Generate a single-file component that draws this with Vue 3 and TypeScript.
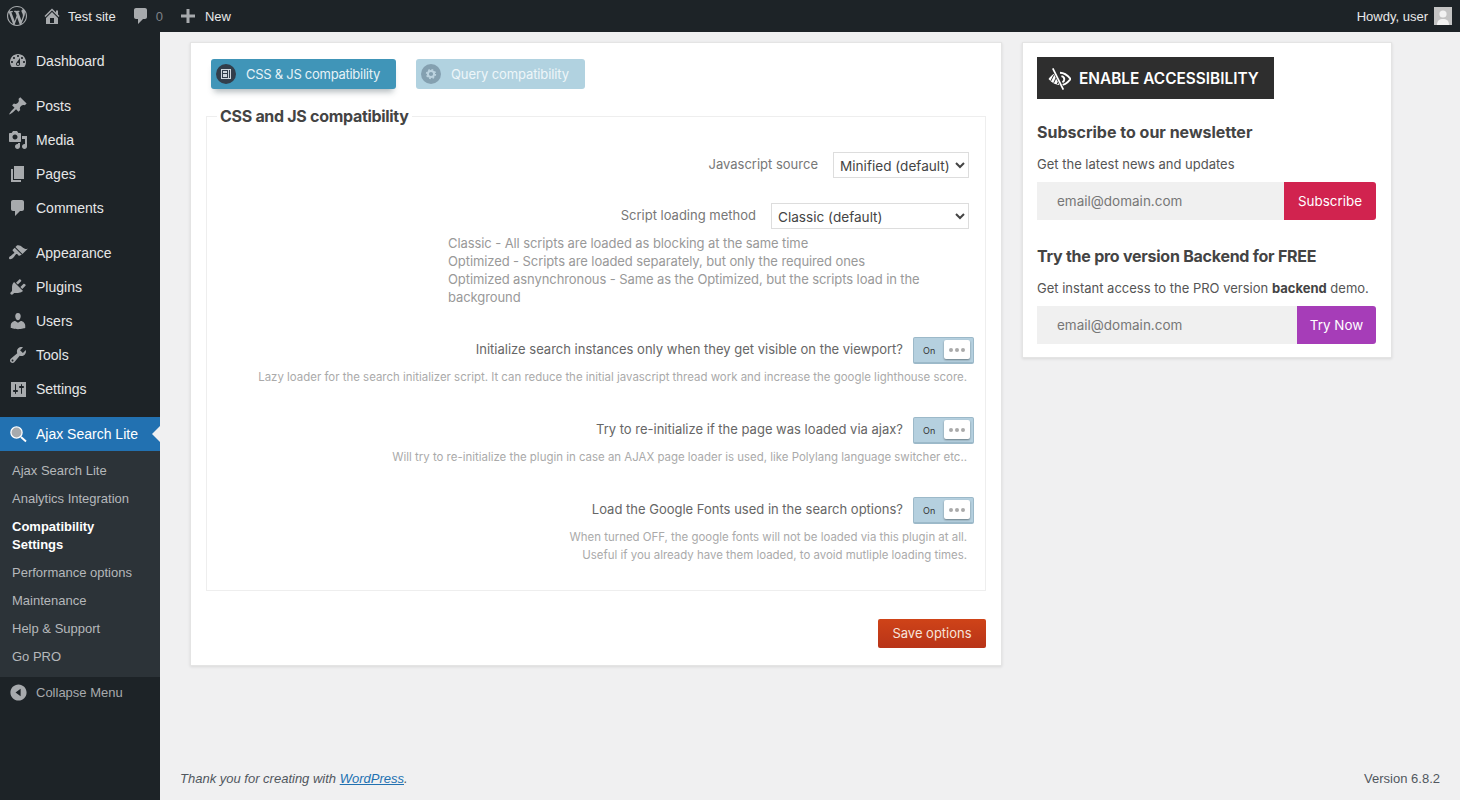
<script setup lang="ts">
const icons: Record<string, string> = {
  dashboard: 'M3.76 16h12.48c1.1-1.37 1.76-3.11 1.76-5 0-4.42-3.58-8-8-8s-8 3.58-8 8c0 1.89.66 3.63 1.76 5zM10 4c.55 0 1 .45 1 1s-.45 1-1 1-1-.45-1-1 .45-1 1-1zM6 6c.55 0 1 .45 1 1s-.45 1-1 1-1-.45-1-1 .45-1 1-1zm8 0c.55 0 1 .45 1 1s-.45 1-1 1-1-.45-1-1 .45-1 1-1zm-5.37 5.55L12 7v6c0 1.1-.9 2-2 2s-2-.9-2-2c0-.57.24-1.08.63-1.45zM4 10c.55 0 1 .45 1 1s-.45 1-1 1-1-.45-1-1 .45-1 1-1zm12 0c.55 0 1 .45 1 1s-.45 1-1 1-1-.45-1-1 .45-1 1-1zm-5 3c0-.55-.45-1-1-1s-1 .45-1 1 .45 1 1 1 1-.45 1-1z',
  posts: 'M10.44 3.02l1.82-1.82 6.36 6.35-1.83 1.82c-1.05-.68-2.48-.57-3.41.36l-.75.75c-.92.93-1.04 2.35-.35 3.41l-1.83 1.82-2.41-2.41-2.8 2.79c-.42.42-3.38 2.71-3.8 2.29s1.86-3.39 2.28-3.81l2.79-2.79L4.1 9.36l1.83-1.82c1.05.69 2.48.57 3.4-.36l.75-.75c.93-.92 1.05-2.35.36-3.41z',
  media: 'M13 11V4c0-.55-.45-1-1-1h-1.67L9 1H5L3.67 3H2c-.55 0-1 .45-1 1v7c0 .55.45 1 1 1h10c.55 0 1-.45 1-1zM7 4.5c1.38 0 2.5 1.12 2.5 2.5S8.38 9.5 7 9.5 4.5 8.38 4.5 7 5.62 4.5 7 4.5zM14 6h5v10.5c0 1.38-1.12 2.5-2.5 2.5S14 17.88 14 16.5s1.12-2.5 2.5-2.5c.17 0 .34.02.5.05V9h-3V6zm-4 8.05V13h2v3.5c0 1.38-1.12 2.5-2.5 2.5S7 17.88 7 16.5 8.12 14 9.5 14c.17 0 .34.02.5.05z',
  pages: 'M6 15V2h10v13H6zm-1 1h8v2H3V5h2v11z',
  comments: 'M5 2h9c1.1 0 2 .9 2 2v7c0 1.1-.9 2-2 2h-2l-5 5v-5H5c-1.1 0-2-.9-2-2V4c0-1.1.9-2 2-2z',
  appearance: 'M14.48 11.06L7.41 3.99l1.5-1.5c.5-.56 2.3-.47 3.51.32 1.21.8 1.43 1.28 2.91 2.1 1.18.64 2.45 1.26 4.45.85zm-.71.71L6.7 4.7 4.93 6.47c-.39.39-.39 1.02 0 1.41l1.06 1.06c.39.39.39 1.03 0 1.42-.6.6-1.43 1.11-2.21 1.69-.35.26-.7.53-1.01.84C1.43 13.23.4 14.96 1.4 15.95c.99 1 2.72-.03 4.05-1.36.31-.31.58-.66.84-1.01.58-.78 1.09-1.61 1.69-2.21.39-.39 1.03-.39 1.42 0l1.06 1.06c.39.39 1.02.39 1.41 0z',
  plugins: 'M13.11 4.36L9.87 7.6 8 5.73l3.24-3.24c.35-.34 1.05-.2 1.56.32.52.51.66 1.21.31 1.55zm-8 1.77l.91-1.12 9.01 9.01-1.19.84c-.71.71-2.63 1.16-3.82 1.16H6.14L4.9 17.26c-.59.59-1.54.59-2.12 0-.59-.58-.59-1.53 0-2.12l1.24-1.24v-3.88c0-1.13.4-3.19 1.09-3.89zm7.26 3.97l3.24-3.24c.34-.35 1.04-.21 1.55.31.52.51.66 1.21.31 1.55l-3.24 3.25z',
  users: 'M10 9.25c-2.27 0-2.73-3.44-2.73-3.44C7 4.02 7.82 2 9.97 2c2.16 0 2.98 2.02 2.71 3.81 0 0-.41 3.44-2.68 3.44zm0 2.57L12.72 10c2.39 0 4.52 2.33 4.52 4.53v2.49s-3.65 1.13-7.24 1.13c-3.65 0-7.24-1.13-7.24-1.13v-2.49c0-2.25 1.94-4.48 4.47-4.48z',
  tools: 'M16.68 9.77c-1.34 1.34-3.3 1.67-4.95.99l-5.41 6.52c-.99.99-2.59.99-3.58 0s-.99-2.59 0-3.57l6.52-5.42c-.68-1.65-.35-3.61.99-4.95 1.28-1.28 3.12-1.62 4.72-1.06l-2.89 2.89 2.82 2.82 2.86-2.87c.53 1.58.18 3.39-1.08 4.65zM3.81 16.21c.4.39 1.04.39 1.43 0 .4-.4.4-1.04 0-1.43-.39-.4-1.03-.4-1.43 0-.39.39-.39 1.03 0 1.43z',
  settings: 'M18 18V3H3v15zM8 11h1c.55 0 1 .45 1 1s-.45 1-1 1H8v1.500c0 .28-.22.5-.5.5s-.5-.22-.5-.5V13H6c-.55 0-1-.45-1-1s.45-1 1-1h1V5.500c0-.28.22-.5.5-.5s.5.22.5.5V11zm5-2h-1c-.55 0-1-.45-1-1s.45-1 1-1h1V5.500c0-.28.22-.5.5-.5s.5.22.5.5V7h1c.55 0 1 .45 1 1s-.45 1-1 1h-1v5.500c0 .28-.22.5-.5.5s-.5-.22-.5-.5V9z',
  home: 'M16 8.5l1.53 1.53-1.06 1.06L10 4.62l-6.47 6.47-1.06-1.06L10 2.5l4 4v-2h2v4zm-6-2.46l6 5.99V18H4v-5.97zM12 17v-5H8v5h4z',
  plus: 'M17 8.5v3h-5.5V17h-3v-5.5H3v-3h5.5V3h3v5.500z',
  wp: 'M20 10c0-5.51-4.49-10-10-10C4.48 0 0 4.49 0 10c0 5.52 4.48 10 10 10 5.51 0 10-4.48 10-10zM7.78 15.37L4.37 6.22c.55-.02 1.17-.08 1.17-.08.5-.06.44-1.13-.06-1.11 0 0-1.45.11-2.37.11-.18 0-.37 0-.58-.01C4.12 2.69 6.87 1.11 10 1.11c2.33 0 4.45.87 6.05 2.34-.68-.11-1.65.39-1.65 1.58 0 .74.45 1.36.9 2.1.35.61.55 1.36.55 2.46 0 1.49-1.4 5-1.4 5l-3.03-8.37c.54-.02.82-.17.82-.17.5-.05.44-1.25-.06-1.22 0 0-1.44.12-2.38.12-.87 0-2.33-.12-2.33-.12-.5-.03-.56 1.2-.06 1.22l.92.08 1.26 3.41zM17.41 10c.24-.64.74-1.87.43-4.25.7 1.29 1.05 2.71 1.05 4.25 0 3.29-1.73 6.24-4.4 7.78.97-2.59 1.94-5.2 2.92-7.78zM6.1 18.09C3.12 16.65 1.11 13.53 1.11 10c0-1.3.23-2.48.72-3.59C3.25 10.3 4.67 14.2 6.1 18.09zm4.03-6.63l2.58 6.98c-.86.29-1.76.45-2.71.45-.79 0-1.57-.11-2.29-.33.81-2.38 1.62-4.74 2.42-7.1z',
  collapse: 'M10 .5c5.24 0 9.5 4.26 9.5 9.5s-4.26 9.5-9.5 9.5S.5 15.24.5 10 4.76.5 10 .5zM12.500 14.500v-9L6.500 10z',
};

const menuGroups = [
  [{ icon: 'dashboard', label: 'Dashboard' }],
  [
    { icon: 'posts', label: 'Posts' },
    { icon: 'media', label: 'Media' },
    { icon: 'pages', label: 'Pages' },
    { icon: 'comments', label: 'Comments' },
  ],
  [
    { icon: 'appearance', label: 'Appearance' },
    { icon: 'plugins', label: 'Plugins' },
    { icon: 'users', label: 'Users' },
    { icon: 'tools', label: 'Tools' },
    { icon: 'settings', label: 'Settings' },
  ],
];

const submenu = [
  { label: 'Ajax Search Lite', current: false },
  { label: 'Analytics Integration', current: false },
  { label: 'Compatibility Settings', current: true },
  { label: 'Performance options', current: false },
  { label: 'Maintenance', current: false },
  { label: 'Help & Support', current: false },
  { label: 'Go PRO', current: false },
];

const toggles = [
  {
    label: 'Initialize search instances only when they get visible on the viewport?',
    desc: ['Lazy loader for the search initializer script. It can reduce the initial javascript thread work and increase the google lighthouse score.'],
  },
  {
    label: 'Try to re-initialize if the page was loaded via ajax?',
    desc: ['Will try to re-initialize the plugin in case an AJAX page loader is used, like Polylang language switcher etc..'],
  },
  {
    label: 'Load the Google Fonts used in the search options?',
    desc: ['When turned OFF, the google fonts will not be loaded via this plugin at all.', 'Useful if you already have them loaded, to avoid mutliple loading times.'],
  },
];
</script>

<template>
  <div class="page">
    <header class="adminbar">
      <div class="bar-left">
        <svg class="bar-wp" viewBox="0 0 20 20"><path :d="icons.wp" /></svg>
        <span class="bar-item site">
          <svg class="bar-icon" viewBox="0 0 20 20"><path :d="icons.home" /></svg>
          Test site
        </span>
        <span class="bar-item count">
          <svg class="bar-icon" viewBox="0 0 20 20"><path :d="icons.comments" /></svg>
          <span class="zero">0</span>
        </span>
        <span class="bar-item new">
          <svg class="bar-icon" viewBox="0 0 20 20"><path :d="icons.plus" /></svg>
          New
        </span>
      </div>
      <div class="howdy">
        Howdy, user
        <span class="avatar">
          <svg viewBox="0 0 18 18"><rect width="18" height="18" fill="#c4c4c4" /><circle cx="9" cy="7" r="3.600" fill="#f2f2f2" /><path d="M3 18c0-4.500 2.500-6 6-6s6 1.500 6 6z" fill="#f2f2f2" /></svg>
        </span>
      </div>
    </header>

    <div class="shell">
      <nav class="sidebar">
        <div v-for="(group, g) in menuGroups" :key="g" class="menu-group">
          <div v-for="item in group" :key="item.label" class="menu-item">
            <svg class="menu-icon" viewBox="0 0 20 20"><path fill-rule="evenodd" :d="icons[item.icon]" /></svg>
            <span>{{ item.label }}</span>
          </div>
        </div>
        <div class="menu-item active">
          <svg class="menu-icon" viewBox="0 0 20 20" fill="none" stroke="#fff"><circle cx="8.500" cy="8.500" r="5.600" stroke-width="1.300" /><path d="M13 13l5 4.500" stroke-width="1.900" /></svg>
          <span>Ajax Search Lite</span>
          <i class="active-arrow"></i>
        </div>
        <ul class="submenu">
          <li v-for="s in submenu" :key="s.label" :class="{ current: s.current }">{{ s.label }}</li>
        </ul>
        <div class="collapse">
          <svg class="collapse-icon" viewBox="0 0 20 20"><path fill-rule="evenodd" :d="icons.collapse" /></svg>
          <span>Collapse Menu</span>
        </div>
      </nav>

      <div class="content">
        <main class="columns">
          <section class="card main-card">
            <div class="tabs">
              <div class="tab on">
                <span class="tab-ico dark">
                  <svg viewBox="0 0 12 12"><rect x="1.500" y="1.500" width="9" height="9" fill="none" stroke="#cfd6dc" stroke-width="1" /><rect x="3" y="3" width="4" height="2" fill="#cfd6dc" /><rect x="3" y="6" width="4" height="3" fill="#cfd6dc" /><rect x="8" y="2" width="1" height="8" fill="#cfd6dc" /></svg>
                </span>
                CSS &amp; JS compatibility
              </div>
              <div class="tab off">
                <span class="tab-ico grey">
                  <svg viewBox="0 0 12 12"><circle cx="6" cy="6" r="3.100" fill="none" stroke="#bcd3df" stroke-width="2" /><circle cx="6" cy="6" r="4.400" fill="none" stroke="#bcd3df" stroke-width="1.500" stroke-dasharray="1.700 1.750" /></svg>
                </span>
                Query compatibility
              </div>
            </div>

            <fieldset class="box">
              <legend>CSS and JS compatibility</legend>

              <div class="opt-row first">
                <label>Javascript source</label>
                <select class="sel sel-a"><option>Minified (default)</option></select>
              </div>

              <div class="opt-row second">
                <label>Script loading method</label>
                <select class="sel sel-b"><option>Classic (default)</option></select>
              </div>
              <div class="method-desc">
                Classic - All scripts are loaded as blocking at the same time<br />
                Optimized - Scripts are loaded separately, but only the required ones<br />
                Optimized asnynchronous - Same as the Optimized, but the scripts load in the background
              </div>

              <div v-for="t in toggles" :key="t.label" class="toggle-block">
                <div class="toggle-row">
                  <span class="toggle-label">{{ t.label }}</span>
                  <span class="switch">
                    <span class="on-text">On</span>
                    <span class="knob"><b></b><b></b><b></b></span>
                  </span>
                </div>
                <p v-for="d in t.desc" :key="d" class="toggle-desc">{{ d }}</p>
              </div>
            </fieldset>

            <div class="save-row"><button class="save">Save options</button></div>
          </section>

          <aside class="card side-card">
            <div class="access">
              <svg viewBox="0 0 24 24" class="eye" fill="none">
                <path d="M12.500 6C17 6 20.500 8.700 23.500 12.500 20.500 16.300 17 19 12.500 19" stroke="#fff" stroke-width="2" />
                <path d="M14 9.500c1.900.4 3 1.700 3 3.200s-1 2.600-2 3" stroke="#fff" stroke-width="2" />
                <path d="M.5 12.500C2.500 10 4.500 8 7 6.700L14 19c-4.500.3-9.500-2-13.500-6.500z" fill="#fff" />
                <path d="M3 14.500L6 8.500M6 16.500l3-6.500M9.500 18l2.500-5" stroke="#2e2e2e" stroke-width="1" />
                <path d="M5 1.500L16 23.500" stroke="#2e2e2e" stroke-width="3.200" />
                <path d="M5 1.500L16 23.500" stroke="#fff" stroke-width="1.800" />
              </svg>
              ENABLE ACCESSIBILITY
            </div>

            <h3 class="side-h first-h">Subscribe to our newsletter</h3>
            <p class="side-p">Get the latest news and updates</p>
            <div class="signup">
              <input placeholder="email@domain.com" />
              <button class="sub">Subscribe</button>
            </div>

            <h3 class="side-h pro">Try the pro version Backend for FREE</h3>
            <p class="side-p">Get instant access to the PRO version <b>backend</b> demo.</p>
            <div class="signup">
              <input placeholder="email@domain.com" />
              <button class="try">Try Now</button>
            </div>
          </aside>
        </main>

        <footer class="foot">
          <span class="thanks">Thank you for creating with <a>WordPress</a>.</span>
          <span>Version 6.8.2</span>
        </footer>
      </div>
    </div>
  </div>
</template>

<style>
html, body { margin: 0; padding: 0; background: #f0f0f1; }
</style>

<style scoped>
.page {
  height: 800px;
  width: 1460px;
  display: flex;
  flex-direction: column;
  overflow: hidden;
  font-family: "Liberation Sans", Arial, sans-serif;
  font-size: 14px;
  background: #f0f0f1;
}
.adminbar {
  height: 32px;
  flex: none;
  background: #1d2327;
  color: #e8e8e9;
  font-size: 13px;
  display: flex;
  justify-content: space-between;
  align-items: center;
}
.bar-left { display: flex; align-items: center; }
.bar-wp { width: 20px; height: 20px; margin-left: 7px; fill: #a7aaad; }
.bar-item { display: flex; align-items: center; }
.bar-icon { width: 20px; height: 20px; fill: #a7aaad; }
.site { margin-left: 15px; gap: 6px; }
.count { margin-left: 15px; gap: 5px; }
.zero { color: #7d8287; }
.new { margin-left: 15px; gap: 7px; }
.howdy { display: flex; align-items: center; gap: 6px; margin-right: 8px; }
.avatar { width: 18px; height: 18px; display: block; }
.avatar svg { display: block; width: 18px; height: 18px; }

.shell { flex: 1; display: flex; min-height: 0; }
.sidebar {
  width: 160px;
  flex: none;
  background: #1d2327;
  padding-top: 12px;
  color: #e6e7e8;
}
.menu-group { margin-bottom: 11px; }
.menu-item {
  height: 34px;
  display: flex;
  align-items: center;
  position: relative;
}
.menu-icon { width: 20px; height: 20px; margin-left: 8px; margin-right: 8px; fill: #a7aaad; flex: none; }
.active { background: #2271b1; color: #fff; }
.active-arrow {
  position: absolute;
  right: 0;
  top: 9px;
  width: 0;
  height: 0;
  border: 8px solid transparent;
  border-right-color: #f0f0f1;
  border-left-width: 0;
}
.submenu {
  list-style: none;
  margin: 0;
  padding: 6px 0;
  background: #2c3338;
  color: #b5b8bb;
  font-size: 13px;
  line-height: 18px;
}
.submenu li { padding: 5px 12px; }
.submenu .current { color: #fff; font-weight: 700; }
.collapse {
  height: 30px;
  display: flex;
  align-items: center;
  font-size: 13px;
  color: #a7aaad;
}
.collapse-icon { width: 17px; height: 17px; margin: 0 9.500px; fill: #a7aaad; flex: none; }

.content { flex: 1; min-width: 0; display: flex; flex-direction: column; }
.columns { flex: 1; display: flex; align-items: flex-start; gap: 20px; padding: 10px 0 0 30px; }
.card {
  background: #fff;
  border: 1px solid #e4e4e4;
  box-shadow: 0 1px 3px rgba(0, 0, 0, 0.1);
  font-family: Inter, "Liberation Sans", sans-serif;
  color: #444;
  box-sizing: border-box;
}
.main-card { width: 812px; height: 624px; padding: 16px 15px 0; }
.tabs { display: flex; gap: 20px; margin-left: 5px; }
.tab {
  height: 30px;
  display: flex;
  align-items: center;
  border-radius: 3px;
  color: #fff;
  font-size: 13px;
  box-sizing: border-box;
  padding-left: 5px;
  gap: 10px;
}
.tab.on { width: 185px; background: #4095b8; color: #e6f2f7; letter-spacing: -0.27px; box-shadow: 0 6px 6px -3px rgba(40, 60, 70, 0.35); }
.tab.off { width: 169px; background: #b1d2e0; color: #eef6f9; letter-spacing: -0.1px; }
.tab-ico { width: 20px; height: 20px; border-radius: 50%; display: flex; align-items: center; justify-content: center; }
.tab-ico svg { width: 12px; height: 12px; }
.dark { background: #323e4b; }
.grey { background: #84a0b0; }

.box {
  margin: 17px 0 0;
  padding: 0 16px 0 0;
  height: 485px;
  border: 1px solid #eeeeee;
  box-sizing: border-box;
  min-width: 0;
}
legend {
  margin-left: 10px;
  padding: 0 3px;
  font-size: 16px;
  font-weight: 700;
  color: #444;
  line-height: 20px;
  letter-spacing: -0.3px;
}
.opt-row { display: flex; justify-content: flex-end; align-items: center; gap: 15px; font-size: 13px; color: #777; }
.opt-row.first { margin-top: 26px; }
.opt-row.second { margin-top: 25px; }
.opt-row label { padding-bottom: 2px; }
.sel {
  height: 26px;
  border: 1px solid #ddd;
  background: #fff;
  color: #444;
  font-family: Inter, sans-serif;
  font-size: 13.600px;
  border-radius: 0;
  padding: 1px 2px 0;
  box-sizing: border-box;
}
.sel-a { width: 136px; }
.sel-b { width: 198px; }
.method-desc {
  margin: 5px 0 0 241px;
  font-size: 13px;
  line-height: 18px;
  color: #999;
  letter-spacing: -0.09px;
}
.toggle-block { margin-top: 31px; }
.toggle-row { display: flex; justify-content: flex-end; align-items: center; gap: 10px; margin-right: -5px; font-size: 13px; color: #666; height: 27px; }
.toggle-label { padding-bottom: 4px; }
.switch {
  width: 61px;
  height: 27px;
  box-sizing: border-box;
  background: #b5d0df;
  border-radius: 2px;
  border: 1px solid #9cb9c9;
  border-bottom-width: 2px;
  position: relative;
  display: block;
}
.on-text { position: absolute; left: 9px; top: 7px; font-size: 9px; line-height: 11px; color: #333; }
.knob {
  position: absolute;
  right: 3px;
  top: 2px;
  width: 26px;
  height: 19px;
  background: #fff;
  border-radius: 2px;
  box-shadow: 0 1px 2px rgba(0, 0, 0, 0.4);
  display: flex;
  align-items: center;
  justify-content: center;
  gap: 2px;
}
.knob b { width: 4px; height: 4px; border-radius: 50%; background: #aaa; }
.toggle-desc { margin: 0 2px 0 0; text-align: right; font-size: 11.450px; line-height: 18px; color: #aaa; }
.toggle-row + .toggle-desc { margin-top: 4px; }

.save-row { display: flex; justify-content: flex-end; margin-top: 28px; }
.save {
  width: 108px;
  height: 29px;
  border: 0;
  border-radius: 2px;
  background: linear-gradient(#cf4318, #b83418);
  color: #f6e3dc;
  font-family: Inter, sans-serif;
  font-size: 13px;
  padding: 0 0 1px;
}

.side-card { width: 370px; height: 316px; padding: 14px 15px 0 14px; }
.access {
  width: 237px;
  height: 42px;
  background: #2e2e2e;
  color: #fff;
  font-size: 15.400px;
  font-weight: 600;
  display: flex;
  align-items: center;
  box-sizing: border-box;
  padding-left: 11px;
  gap: 8px;
}
.eye { width: 23px; height: 23px; flex: none; }
.side-h { margin: 0; font-size: 16px; line-height: 20px; font-weight: 700; color: #444; }
.first-h { margin-top: 23px; }
.pro { margin-top: 26px; letter-spacing: -0.25px; }
.side-p { margin: 13px 0 9px; font-size: 13px; line-height: 18px; color: #555; }
.side-p b { font-weight: 700; color: #444; }
.signup { display: flex; height: 38px; }
.signup input {
  flex: 1;
  min-width: 0;
  border: 0;
  outline: 0;
  background: #f0f0f0;
  font-family: Inter, sans-serif;
  font-size: 13.500px;
  padding: 0 20px;
  box-sizing: border-box;
}
.signup input::placeholder { color: #777; opacity: 1; }
.signup button {
  border: 0;
  padding: 0;
  color: #fff;
  font-family: Inter, sans-serif;
  font-size: 13.400px;
  border-radius: 0 3px 3px 0;
}
.sub { width: 92px; background: #d1234f; }
.try { width: 79px; background: #a63db8; }

.foot {
  height: 29px;
  flex: none;
  display: flex;
  justify-content: space-between;
  padding: 0 20px;
  font-size: 13px;
  color: #50575e;
  line-height: 16px;
}
.thanks { font-style: italic; }
.thanks a { color: #2271b1; text-decoration: underline; }
</style>
